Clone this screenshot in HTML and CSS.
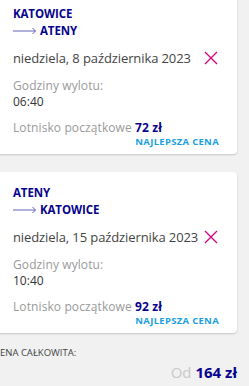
FILE: index.html
```html
<!DOCTYPE html>
<html lang="pl">
<head>
<meta charset="utf-8">
<link rel="stylesheet" href="styles.css">
</head>
<body>
<div class="wrap">
  <div class="card first">
    <div class="city">KATOWICE</div>
    <div class="dest">
      <svg class="arrow" width="24" height="8" viewBox="0 0 24 8"><line x1="0" y1="4" x2="22.5" y2="4"/><polyline points="19.5,1 22.5,4 19.5,7"/></svg>
      <span class="city">ATENY</span>
    </div>
    <div class="date-row">
      <span class="date">niedziela, 8 października 2023</span>
      <svg class="close" width="14" height="14" viewBox="0 0 14 14"><line x1="1" y1="1" x2="13" y2="13"/><line x1="13" y1="1" x2="1" y2="13"/></svg>
    </div>
    <div class="label">Godziny wylotu:</div>
    <div class="time">06:40</div>
    <div class="label price-line">Lotnisko początkowe <b class="price">72 zł</b></div>
    <div class="best">NAJLEPSZA CENA</div>
  </div>
  <div class="card">
    <div class="city">ATENY</div>
    <div class="dest">
      <svg class="arrow" width="24" height="8" viewBox="0 0 24 8"><line x1="0" y1="4" x2="22.5" y2="4"/><polyline points="19.5,1 22.5,4 19.5,7"/></svg>
      <span class="city">KATOWICE</span>
    </div>
    <div class="date-row">
      <span class="date">niedziela, 15 października 2023</span>
      <svg class="close" width="14" height="14" viewBox="0 0 14 14"><line x1="1" y1="1" x2="13" y2="13"/><line x1="13" y1="1" x2="1" y2="13"/></svg>
    </div>
    <div class="label">Godziny wylotu:</div>
    <div class="time">10:40</div>
    <div class="label price-line">Lotnisko początkowe <b class="price">92 zł</b></div>
    <div class="best">NAJLEPSZA CENA</div>
  </div>
  <div class="total">
    <div class="total-label">CENA CAŁKOWITA:</div>
    <div class="total-price"><span class="od">Od</span> <b class="sum">164 zł</b></div>
  </div>
</div>
</body>
</html>
```
FILE: styles.css
```css
html, body {
  margin: 0;
  padding: 0;
  background: #f1f1f1;
  font-family: "Open Sans", "Noto Sans", sans-serif;
  overflow: hidden;
}
.wrap {
  margin-left: -6px;
  width: 243px;
}
.card {
  background: #fff;
  border-radius: 4px;
  box-shadow: 0 1px 2px rgba(0,0,0,0.18);
  padding: 13px 18px 6px 19px;
}
.card + .card {
  margin-top: 18px;
}
.card.first {
  margin-top: -7px;
}
.city {
  font-size: 11.5px;
  font-weight: 700;
  color: #06038d;
  line-height: 16px;
  letter-spacing: -0.1px;
}
.dest {
  display: flex;
  align-items: center;
  gap: 3px;
  height: 17px;
}
.arrow line, .arrow polyline {
  stroke: #6461b8;
  stroke-width: 1;
  fill: none;
}
.date-row {
  display: flex;
  justify-content: space-between;
  align-items: center;
  margin-top: 8px;
  height: 22px;
}
.date {
  font-size: 13px;
  color: #444;
  white-space: nowrap;
  letter-spacing: -0.1px;
}
.close {
  margin-right: 1px;
  flex-shrink: 0;
}
.close line {
  stroke: #d5007f;
  stroke-width: 1.2;
}
.label {
  font-size: 12px;
  color: #9a9a9a;
  line-height: 16px;
  margin-top: 9px;
  letter-spacing: 0.1px;
}
.time {
  font-size: 12px;
  color: #333;
  line-height: 16px;
}
.price-line {
  margin-top: 10px;
}
.price {
  color: #06038d;
  font-weight: 700;
}
.best {
  text-align: right;
  font-size: 9.5px;
  font-weight: 700;
  color: #1c9fe0;
  line-height: 12px;
  letter-spacing: 0.3px;
}
.total {
  margin-top: 14px;
}
.total-label {
  font-size: 9.5px;
  color: #444;
  line-height: 12px;
}
.total-price {
  text-align: right;
  margin-top: 3px;
  font-size: 15px;
  line-height: 20px;
}
.od {
  color: #c9c9c9;
}
.sum {
  color: #06038d;
  font-weight: 700;
}
```
